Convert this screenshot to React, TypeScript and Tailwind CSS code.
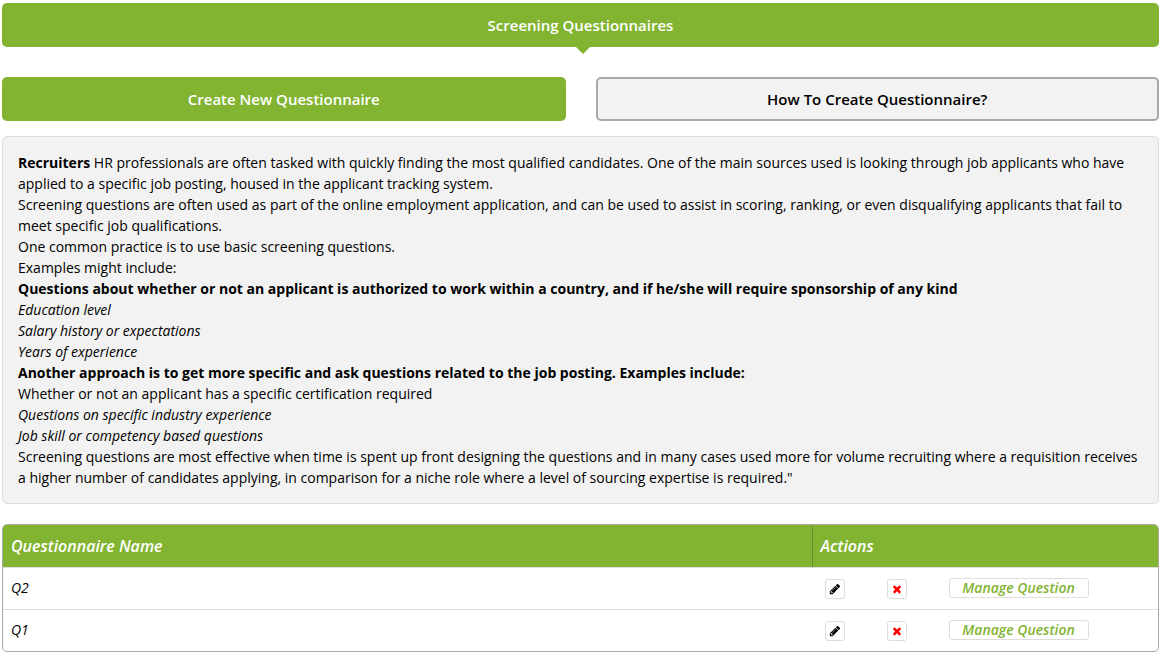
import React from "react";

const introLines: { text: string; lead?: string; style?: string }[] = [
  {
    lead: "Recruiters",
    text: "HR professionals are often tasked with quickly finding the most qualified candidates. One of the main sources used is looking through job applicants who have applied to a specific job posting, housed in the applicant tracking system.",
  },
  {
    text: "Screening questions are often used as part of the online employment application, and can be used to assist in scoring, ranking, or even disqualifying applicants that fail to meet specific job qualifications.",
  },
  { text: "One common practice is to use basic screening questions." },
  { text: "Examples might include:" },
  {
    text: "Questions about whether or not an applicant is authorized to work within a country, and if he/she will require sponsorship of any kind",
    style: "font-bold",
  },
  { text: "Education level", style: "italic" },
  { text: "Salary history or expectations", style: "italic" },
  { text: "Years of experience", style: "italic" },
  {
    text: "Another approach is to get more specific and ask questions related to the job posting. Examples include:",
    style: "font-bold",
  },
  { text: "Whether or not an applicant has a specific certification required" },
  { text: "Questions on specific industry experience", style: "italic" },
  { text: "Job skill or competency based questions", style: "italic" },
  {
    text: 'Screening questions are most effective when time is spent up front designing the questions and in many cases used more for volume recruiting where a requisition receives a higher number of candidates applying, in comparison for a niche role where a level of sourcing expertise is required."',
  },
];

const questionnaires = ["Q2", "Q1"];

function PencilIcon() {
  return (
    <svg viewBox="0 0 1792 1792" className="size-3 fill-black" aria-hidden="true">
      <path d="M491 1536l91-91-235-235-91 91v107h128v128h107zm523-928q0-22-22-22-10 0-17 7l-542 542q-7 7-7 17 0 22 22 22 10 0 17-7l542-542q7-7 7-17zm-54-192l416 416-832 832h-416v-416zm683 96q0 53-37 90l-166 166-416-416 166-165q36-38 90-38 53 0 91 38l235 234q37 39 37 91z" />
    </svg>
  );
}

function CrossIcon() {
  return (
    <svg viewBox="0 0 1792 1792" className="size-3 fill-[#ff0000]" aria-hidden="true">
      <path d="M1490 1322q0 40-28 68l-136 136q-28 28-68 28t-68-28l-294-294-294 294q-28 28-68 28t-68-28l-136-136q-28-28-28-68t28-68l294-294-294-294q-28-28-28-68t28-68l136-136q28-28 68-28t68 28l294 294 294-294q28-28 68-28t68 28l136 136q28 28 28 68t-28 68l-294 294 294 294q28 28 28 68z" />
    </svg>
  );
}

export default function App() {
  return (
    <main className="bg-white pt-[3px] pr-1 pb-1.5 pl-0.5 font-['Open_Sans','Noto_Sans',sans-serif] text-sm leading-[21px] text-black">
      <h1 className="relative flex h-11 items-center justify-center rounded-[5px] bg-[#82b432] text-[15px] font-semibold text-white">
        Screening Questionnaires
        <svg
          viewBox="0 0 14 7"
          className="absolute top-full left-1/2 h-[7px] w-3.5 -translate-x-[5px] fill-[#82b432]"
          aria-hidden="true"
        >
          <path d="M0 0h14L7 7z" />
        </svg>
      </h1>

      <div className="mt-[30px] grid grid-cols-2 gap-[30px]">
        <button type="button" className="h-11 rounded-[5px] bg-[#82b432] text-[15px] font-semibold text-white">
          Create New Questionnaire
        </button>
        <button
          type="button"
          className="h-11 rounded-[5px] border-2 border-[#a9a9a9] bg-[#f2f2f2] text-[15px] font-semibold text-black"
        >
          How To Create Questionnaire?
        </button>
      </div>

      <section className="mt-[15px] rounded-[5px] border border-[#dddddd] bg-[#f2f2f2] p-[15px]">
        {introLines.map((line) => (
          <p key={line.text} className={line.style}>
            {line.lead && <strong>{line.lead}</strong>}
            {line.lead && " "}
            {line.text}
          </p>
        ))}
      </section>

      <div className="mt-5 overflow-hidden rounded-[5px] border border-[#a9a9a9]">
        <table className="w-full table-fixed border-separate border-spacing-0 italic">
          <thead>
            <tr className="h-[42px] bg-[#82b432] text-left text-base text-white">
              <th scope="col" className="w-[70%] px-2 font-semibold">
                Questionnaire Name
              </th>
              <th scope="col" className="border-l border-[#689028] px-2 font-semibold">
                Actions
              </th>
            </tr>
          </thead>
          <tbody>
            {questionnaires.map((name) => (
              <tr key={name} className="h-[42px]">
                <td className="border-t border-[#dddddd] px-2 pb-0.5 font-medium">{name}</td>
                <td className="border-t border-[#dddddd] px-[13px] pb-0.5">
                  <div className="flex items-center">
                    <div className="w-[62px] pt-0.5">
                      <button
                        type="button"
                        aria-label={`Edit ${name}`}
                        className="flex size-5 items-center justify-center rounded-[3px] border border-[#dddddd] bg-white"
                      >
                        <PencilIcon />
                      </button>
                    </div>
                    <div className="w-[62px] pt-0.5">
                      <button
                        type="button"
                        aria-label={`Delete ${name}`}
                        className="flex size-5 items-center justify-center rounded-[3px] border border-[#dddddd] bg-white"
                      >
                        <CrossIcon />
                      </button>
                    </div>
                    <button
                      type="button"
                      className="flex h-5 w-[140px] items-center justify-center rounded-[3px] border border-[#dddddd] bg-white font-semibold text-[#82b432] italic"
                    >
                      Manage Question
                    </button>
                  </div>
                </td>
              </tr>
            ))}
          </tbody>
        </table>
      </div>
    </main>
  );
}
